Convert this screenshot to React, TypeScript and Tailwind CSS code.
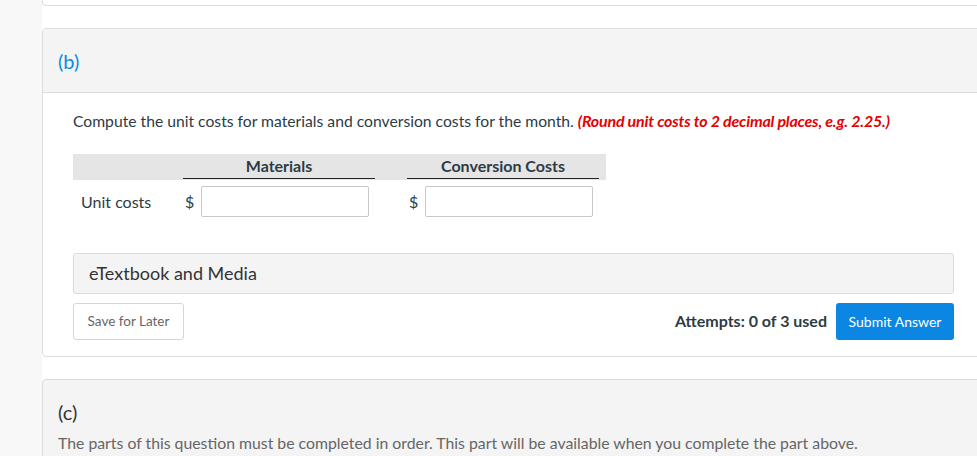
import React from "react";

export default function App() {
  return (
    <div
      className="w-[977px] h-[456px] overflow-hidden bg-[#f8f8f8] flex"
      style={{ fontFamily: "Lato, 'Open Sans', sans-serif" }}
    >
      <div className="w-[42px] shrink-0" />
      <div className="flex-1 bg-white flex flex-col min-w-0">
        <div className="w-[944px] h-[6px] border border-t-0 border-[#dcdcdc] rounded-b-[4px] shrink-0" />
        <div className="h-[22px] shrink-0" />
        {/* Part (b) */}
        <div className="w-[944px] border border-[#dcdcdc] rounded-[4px] shrink-0">
          <div className="h-[64px] bg-[#f4f4f4] border-b border-[#dcdcdc] flex items-center pl-[15px] rounded-t-[4px]">
            <span className="text-[20px] text-[#0a8ce0]">(b)</span>
          </div>
          <div className="pl-[30px] pr-[31px] pt-[18px] pb-[16px]">
            <p className="text-[15.7px] leading-[20px] text-[#2d3b45] whitespace-nowrap">
              Compute the unit costs for materials and conversion costs for the month.{" "}
              <span className="text-[#e60000] font-bold italic text-[16px] tracking-[-0.2px]">
                (Round unit costs to 2 decimal places, e.g. 2.25.)
              </span>
            </p>
            <div className="mt-[23px] w-[533px]">
              <div className="grid grid-cols-[110px_192px_32px_192px_7px] h-[26px] bg-[#e5e5e5]">
                <div />
                <div className="border-b border-[#222] h-[25px] flex items-center justify-center text-[16px] font-bold text-[#2d3b45]">
                  Materials
                </div>
                <div />
                <div className="border-b border-[#222] h-[25px] flex items-center justify-center text-[16px] font-bold text-[#2d3b45]">
                  Conversion Costs
                </div>
                <div />
              </div>
              <div className="grid grid-cols-[110px_192px_32px_192px_7px] mt-[6px] h-[31px] items-center">
                <div className="pl-[8px] text-[16px] text-[#2d3b45]">Unit costs</div>
                <div className="flex items-center">
                  <span className="pl-[2px] w-[18px] text-[16px] text-[#2d3b45]">$</span>
                  <div className="w-[168px] h-[31px] border border-[#c8c8c8] rounded-[2px] bg-white" />
                </div>
                <div />
                <div className="flex items-center">
                  <span className="pl-[2px] w-[18px] text-[16px] text-[#2d3b45]">$</span>
                  <div className="w-[168px] h-[31px] border border-[#c8c8c8] rounded-[2px] bg-white" />
                </div>
                <div />
              </div>
            </div>
            <div className="mt-[36px] h-[41px] bg-[#f4f4f4] border border-[#dcdcdc] rounded-[3px] flex items-center pl-[15px] text-[18px] text-[#333]">
              eTextbook and Media
            </div>
            <div className="mt-[9px] flex items-center">
              <div className="w-[111px] h-[37px] border border-[#d6d6d6] rounded-[3px] flex items-center justify-center text-[13.5px] text-[#666]">
                Save for Later
              </div>
              <div className="flex-1" />
              <span className="text-[16px] font-bold text-[#2d3b45] mr-[9px] -mt-[2px]">Attempts: 0 of 3 used</span>
              <div className="w-[118px] h-[37px] bg-[#0b87e3] rounded-[3px] flex items-center justify-center text-[14px] text-white">
                Submit Answer
              </div>
            </div>
          </div>
        </div>
        <div className="h-[22px] shrink-0" />
        {/* Part (c) */}
        <div className="w-[944px] h-[120px] border border-[#dcdcdc] rounded-t-[4px] bg-[#f4f4f4] pl-[15px] pt-[19px] shrink-0">
          <div className="text-[20px] text-[#333] leading-[26px]">(c)</div>
          <p className="mt-[8px] text-[15.8px] text-[#666] leading-[20px] whitespace-nowrap">
            The parts of this question must be completed in order. This part will be available when you complete the part above.
          </p>
        </div>
      </div>
    </div>
  );
}
